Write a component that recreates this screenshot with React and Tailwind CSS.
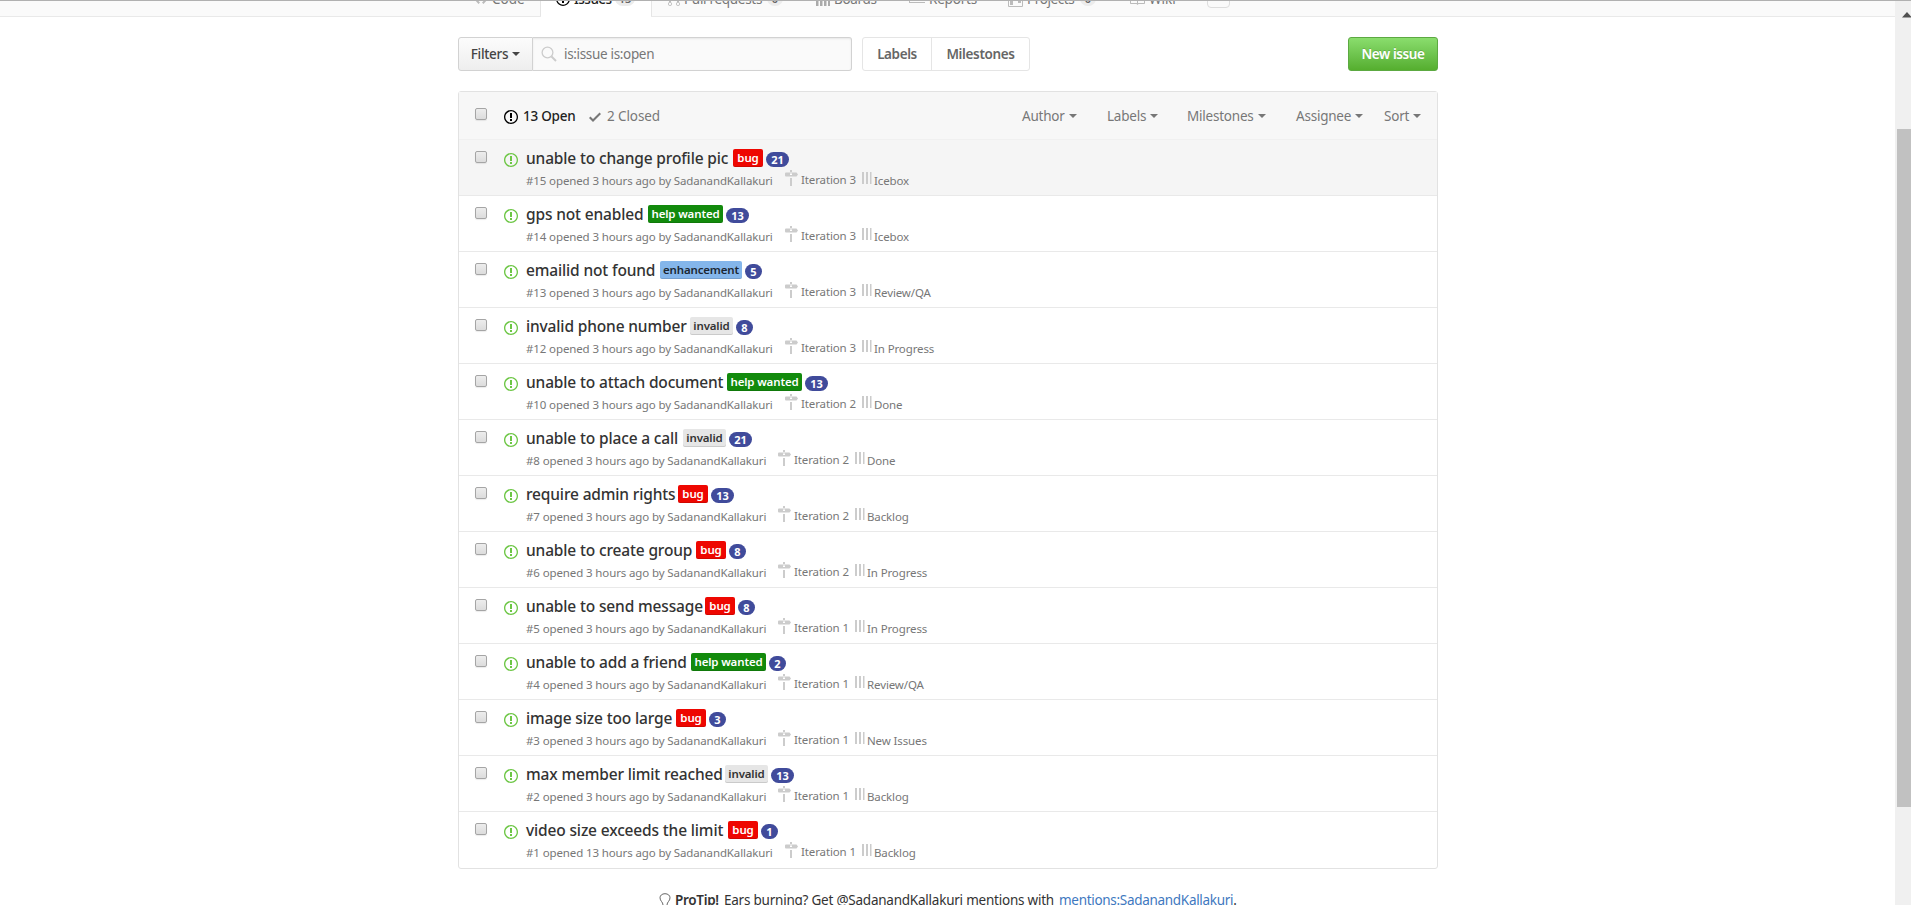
import React from "react";

const LABELS = {
  bug: "w-[30px] bg-[#ee0701] text-white",
  "help wanted": "w-[75px] bg-[#128a0c] text-white",
  enhancement: "w-[82px] bg-[#84b6eb] text-[#1c2733]",
  invalid: "w-[43px] bg-[#e6e6e6] text-[#333]",
};

const ISSUES = [
  { n: 15, title: "unable to change profile pic", w: "w-[207px]", label: "bug", pts: 21, it: 3, col: "Icebox" },
  { n: 14, title: "gps not enabled", w: "w-[122px]", label: "help wanted", pts: 13, it: 3, col: "Icebox" },
  { n: 13, title: "emailid not found", w: "w-[134px]", label: "enhancement", pts: 5, it: 3, col: "Review/QA" },
  { n: 12, title: "invalid phone number", w: "w-[164px]", label: "invalid", pts: 8, it: 3, col: "In Progress" },
  { n: 10, title: "unable to attach document", w: "w-[201px]", label: "help wanted", pts: 13, it: 2, col: "Done" },
  { n: 8, title: "unable to place a call", w: "w-[157px]", label: "invalid", pts: 21, it: 2, col: "Done" },
  { n: 7, title: "require admin rights", w: "w-[152px]", label: "bug", pts: 13, it: 2, col: "Backlog" },
  { n: 6, title: "unable to create group", w: "w-[170px]", label: "bug", pts: 8, it: 2, col: "In Progress" },
  { n: 5, title: "unable to send message", w: "w-[179px]", label: "bug", pts: 8, it: 1, col: "In Progress" },
  { n: 4, title: "unable to add a friend", w: "w-[165px]", label: "help wanted", pts: 2, it: 1, col: "Review/QA" },
  { n: 3, title: "image size too large", w: "w-[150px]", label: "bug", pts: 3, it: 1, col: "New Issues" },
  { n: 2, title: "max member limit reached", w: "w-[199px]", label: "invalid", pts: 13, it: 1, col: "Backlog" },
  { n: 1, title: "video size exceeds the limit", w: "w-[202px]", label: "bug", pts: 1, it: 1, col: "Backlog", hours: 13 },
];

function IssueIcon({ className }) {
  return (
    <svg viewBox="0 0 14 16" className={"h-4 w-3.5 shrink-0 " + className} fill="currentColor">
      <path fillRule="evenodd" d="M7 2.3c3.14 0 5.7 2.56 5.7 5.7s-2.56 5.7-5.7 5.7A5.71 5.71 0 0 1 1.3 8c0-3.14 2.56-5.7 5.7-5.7zM7 1C3.14 1 0 4.14 0 8s3.14 7 7 7 7-3.14 7-7-3.14-7-7-7zm1 3H6v5h2V4zm0 6H6v2h2v-2z" />
    </svg>
  );
}

function Octicon({ w, d, className }) {
  return (
    <svg viewBox={`0 0 ${w} 16`} width={w} height="16" className={"shrink-0 " + (className || "")} fill="currentColor">
      <path fillRule="evenodd" d={d} />
    </svg>
  );
}

const CODE = "M9.5 3L8 4.5 11.5 8 8 11.5 9.5 13 14 8 9.5 3zm-5 0L0 8l4.5 5L6 11.5 2.500 8 6 4.500 4.500 3z";
const PULL = "M11 11.28V5c-.03-.78-.34-1.470-.94-2.060C9.460 2.350 8.780 2.030 8 2H7V0L4 3l3 3V4h1c.27.02.48.11.69.31.21.2.3.42.31.69v6.280A1.993 1.993 0 0 0 10 15a1.993 1.993 0 0 0 1-3.720zm-1 2.920c-.66 0-1.200-.55-1.200-1.200 0-.65.55-1.200 1.200-1.200.65 0 1.200.55 1.200 1.200 0 .65-.55 1.200-1.200 1.200zM4 3c0-1.110-.89-2-2-2a1.993 1.993 0 0 0-1 3.720v6.560A1.993 1.993 0 0 0 2 15a1.993 1.993 0 0 0 1-3.720V4.720c.59-.34 1-.98 1-1.720zm-.8 10c0 .66-.55 1.200-1.200 1.200-.65 0-1.200-.55-1.200-1.200 0-.65.55-1.200 1.200-1.200.65 0 1.200.55 1.200 1.200zM2 4.200C1.340 4.200.8 3.650.8 3c0-.65.55-1.200 1.200-1.200.65 0 1.200.55 1.200 1.200 0 .65-.55 1.200-1.200 1.200z";
const BOARDS = "M0 2h2.500v13H0V2zm4 0h2.500v13H4V2zm4 0h2.500v13H8V2zm4 0h2v13h-2V2z";
const REPORTS = "M16 11v1H0V0h1v11h15zM5 10H3V7h2v3zm4 0H7V3h2v7zm4 0h-2V5h2v5z";
const PROJECT = "M10 12h3V2h-3v10zm-4-2h3V2H6v8zm-4 4h3V2H2v12zm-1 1h13V1H1v14zM14 0H1a1 1 0 0 0-1 1v14a1 1 0 0 0 1 1h13a1 1 0 0 0 1-1V1a1 1 0 0 0-1-1z";
const BOOK = "M3 5h4v1H3V5zm0 3h4V7H3v1zm0 2h4V9H3v1zm11-5h-4v1h4V5zm0 2h-4v1h4V7zm0 2h-4v1h4V9zm2-6v9c0 .55-.45 1-1 1H9.500l-1 1-1-1H2c-.55 0-1-.45-1-1V3c0-.55.45-1 1-1h5.500l1 1 1-1H15c.55 0 1 .45 1 1zm-8 .5L7.500 3H2v9h6V3.500zm7-.5H9.500l-.5.500V12h6V3z";
const CHECK = "M12 5l-8 8-4-4 1.500-1.500L4 10l6.500-6.500z";

function Caret() {
  return <span className="ml-1 inline-block border-x-4 border-t-4 border-x-transparent border-t-current align-[3px]" />;
}

function Checkbox() {
  return <span className="block size-3 shrink-0 rounded-[2px] border border-[#a5a5a5] bg-linear-to-b from-[#ededed] to-[#dcdcdc] shadow-[0_1px_1px_rgba(0,0,0,0.08)]" />;
}

function Tab({ icon, w, text, tw, count, cw }) {
  return (
    <div className={"flex h-4 shrink-0 items-center " + w}>
      {icon}
      <span className={"ml-1 whitespace-nowrap leading-4 " + tw}>{text}</span>
      {count !== undefined && (
        <span className={"mb-px flex h-[15px] items-center justify-center rounded-full bg-[#ececec] text-[11px] font-semibold leading-[15px] text-[#666] " + cw}>{count}</span>
      )}
    </div>
  );
}

function RepoNav() {
  return (
    <div className="h-[15px] w-full shrink-0 overflow-hidden bg-[#fafafa]">
      <div className="flex h-[15px] pl-[458px] text-[13.5px] text-[#777]">
        <div className="flex w-[83px] border-r border-[#e5e5e5] pl-4">
          <div className="-mt-2.5 flex h-4">
            <Tab w="" icon={<Octicon w={14} d={CODE} className="text-[#bbb]" />} tw="" text="Code" />
          </div>
        </div>
        <div className="w-[110px] bg-white pl-[15px] text-[#222]">
          <div className="-mt-2.5 flex h-4">
            <Tab w="" icon={<IssueIcon className="text-black" />} tw="w-[41px] font-medium tracking-[-0.5px]" text="Issues" count="13" cw="w-5" />
          </div>
        </div>
        <div className="flex border-l border-[#e5e5e5] pl-4">
          <div className="-mt-2.5 flex h-4">
            <Tab w="w-[148px]" icon={<Octicon w={12} d={PULL} className="text-[#bbb]" />} tw="w-[83px] tracking-[-0.3px]" text="Pull requests" count="0" cw="w-4" />
            <Tab w="w-[93px]" icon={<Octicon w={14} d={BOARDS} className="text-[#aaa]" />} tw="tracking-[-0.3px]" text="Boards" />
            <Tab w="w-[99px]" icon={<Octicon w={16} d={REPORTS} className="text-[#bbb]" />} tw="tracking-[-0.2px]" text="Reports" />
            <Tab w="w-[121px]" icon={<Octicon w={15} d={PROJECT} className="text-[#bbb]" />} tw="w-[53px] tracking-[-0.4px]" text="Projects" count="0" cw="w-4" />
            <Tab w="w-[78px]" icon={<Octicon w={16} d={BOOK} className="text-[#bbb]" />} tw="" text="Wiki" />
            <div className="h-[17px] w-[23px] rounded border border-[#ddd]" />
          </div>
        </div>
      </div>
    </div>
  );
}

function Toolbar() {
  return (
    <div className="flex h-[34px] text-[13.5px] leading-8">
      <div className="flex w-[75px] items-center justify-center rounded-l-[3px] border border-[#d2d2d2] bg-linear-to-b from-[#fcfcfc] to-[#eee] font-medium text-[#444]">
        <span className="tracking-[-0.3px]">Filters<Caret /></span>
      </div>
      <div className="flex w-[319px] items-center rounded-r-[3px] border border-l-0 border-[#d2d2d2] bg-[#fafafa] pl-2 text-[#777] shadow-[inset_0_1px_2px_rgba(0,0,0,0.075)]">
        <svg viewBox="0 0 16 16" className="size-4 text-[#ccc]" fill="none" stroke="currentColor">
          <circle cx="6.500" cy="6.500" r="5.400" strokeWidth="1.300" />
          <path d="M10.500 10.500L15 15" strokeWidth="2" />
        </svg>
        <span className="ml-[7px] tracking-[-0.33px]">is:issue is:open</span>
      </div>
      <div className="ml-2.5 flex w-[168px] rounded-[3px] border border-[#e5e5e5] font-semibold text-[#666]">
        <span className="flex w-[69px] items-center justify-center border-r border-[#e5e5e5] tracking-[-0.4px]">Labels</span>
        <span className="flex flex-1 items-center justify-center tracking-[-0.35px]">Milestones</span>
      </div>
      <div className="ml-auto flex w-[90px] items-center justify-center rounded-[3px] border border-[#5ca941] bg-linear-to-b from-[#8add6d] to-[#55ae2e] font-semibold tracking-[-0.4px] text-white [text-shadow:0_-1px_0_rgba(0,0,0,0.15)]">
        New issue
      </div>
    </div>
  );
}

function ListHeader() {
  return (
    <div className="flex h-[47px] items-start bg-[#f7f7f7] pl-4 text-[13.5px] leading-5 text-[#777]">
      <div className="pt-4"><Checkbox /></div>
      <IssueIcon className="ml-[17px] mt-[17px] text-black" />
      <span className="ml-[5px] mt-[14px] w-[66px] font-medium tracking-[-0.25px] text-[#222]">13 Open</span>
      <Octicon w={12} d={CHECK} className="mt-[17px]" />
      <span className="ml-1.5 mt-[14px] tracking-[-0.1px]">2 Closed</span>
      <div className="ml-auto mt-[14px] flex whitespace-nowrap tracking-[-0.22px]">
        <span className="w-[85px]">Author<Caret /></span>
        <span className="w-[80px]">Labels<Caret /></span>
        <span className="w-[109px]">Milestones<Caret /></span>
        <span className="w-[88px]">Assignee<Caret /></span>
        <span className="w-[53px]">Sort<Caret /></span>
      </div>
    </div>
  );
}

function Signpost() {
  return (
    <svg viewBox="0 0 14 16" className="h-4 w-3.5 shrink-0 text-[#ccc]" fill="currentColor">
      <path d="M5 0h2v2H5zM1 2.500h10.500l1.500 2-1.500 2H1a1 1 0 0 1-1-1v-2a1 1 0 0 1 1-1zM5 8h2v8H5z" />
      <path d="M5 3.500h2v1.500H5z" className="fill-white" />
    </svg>
  );
}

function Columns() {
  return (
    <svg viewBox="0 0 10 12" className="h-3 w-2.5 shrink-0 text-[#ccc]" fill="currentColor">
      <path d="M0 0h2v12H0zM4 0h2v12H4zM8 0h1.500v12H8z" />
    </svg>
  );
}

function Row({ issue, active }) {
  return (
    <div className={"flex h-14 items-start border-t pl-4 " + (active ? "border-[#f0f0f0] bg-[#f5f5f5]" : "border-[#e9e9e9]")}>
      <div className="pt-[11px]"><Checkbox /></div>
      <IssueIcon className="ml-[17px] mt-3 text-[#6cc644]" />
      <div className="ml-2 flex flex-col whitespace-nowrap">
        <div className="mt-1.5 flex h-6 items-start">
          <span className={"shrink-0 text-[15.5px] font-medium leading-6 tracking-[-0.15px] text-[#333] " + issue.w}>{issue.title}</span>
          <span className={"mt-[3px] flex h-[18px] items-center justify-center rounded-[2px] text-[11.5px] font-semibold tracking-[-0.15px] shadow-[inset_0_-1px_0_rgba(0,0,0,0.12)] " + LABELS[issue.label]}>{issue.label}</span>
          <span className={"ml-[3px] mt-1.5 flex h-[15px] items-center justify-center rounded-full bg-[#404b9b] text-[11px] font-bold leading-[15px] text-white " + (issue.pts > 9 ? "w-[23px]" : "w-[17px]")}>{issue.pts}</span>
        </div>
        <div className="flex h-5 items-start text-[11.5px] leading-4 tracking-[-0.12px] text-[#777]">
          <span className={"mt-[3px] " + (issue.n > 9 || issue.hours ? "w-[259px]" : "w-[252px]")}>
            #{issue.n} opened {issue.hours || 3} hours ago by SadanandKallakuri
          </span>
          <Signpost />
          <span className="ml-[2px] mt-[2px] w-[61px]">Iteration {issue.it}</span>
          <span className="mt-[2px]"><Columns /></span>
          <span className="ml-[2px] mt-[3px]">{issue.col}</span>
        </div>
      </div>
    </div>
  );
}

export default function App() {
  return (
    <div className="flex h-[905px] w-[1911px] flex-col overflow-hidden border-t border-[#b0b0b0] bg-white font-['Noto_Sans',sans-serif]">
      <div className="flex min-h-0 flex-1">
        <main className="flex w-[1895px] flex-col overflow-hidden">
          <RepoNav />
          <div className="flex h-px shrink-0">
            <div className="w-[541px] bg-[#e9e9e9]" />
            <div className="w-[110px]" />
            <div className="flex-1 bg-[#e9e9e9]" />
          </div>
          <div className="ml-[458px] mt-5 w-[980px] shrink-0">
            <Toolbar />
            <div className="mt-5 h-[778px] rounded-[3px] border border-[#e2e2e2]">
              <ListHeader />
              {ISSUES.map((issue, i) => (
                <Row key={issue.n} issue={issue} active={i === 0} />
              ))}
            </div>
            <div className="ml-[201px] mt-[21px] flex items-start whitespace-nowrap text-[13.5px] leading-5 tracking-[-0.3px] text-[#333]">
              <svg viewBox="0 0 12 16" className="mt-[3px] h-4 w-3 text-[#666]" fill="none" stroke="currentColor">
                <path d="M4 12c0-3-3-4-3-7.200C1 2.500 3 .7 6 .7s5 1.800 5 4.100C11 8 8 9 8 12v2H4z" />
              </svg>
              <span className="ml-1 w-[49px] font-semibold">ProTip!</span>
              <span className="w-[335px] tracking-[-0.23px]">Ears burning? Get @SadanandKallakuri mentions with</span>
              <span className="text-[#4078c0]">mentions:SadanandKallakuri</span>.
            </div>
          </div>
        </main>
        <div className="flex w-4 flex-col overflow-hidden bg-[#f0f0f0] pl-0.5">
          <svg viewBox="0 0 14 8" className="mt-2.5 h-2 w-3.5 shrink-0">
            <path d="M5 6.500L10 1l5 5.500z" fill="#505050" />
          </svg>
          <div className="mt-[110px] h-[678px] shrink-0 bg-[#c1c1c1]" />
        </div>
      </div>
    </div>
  );
}
